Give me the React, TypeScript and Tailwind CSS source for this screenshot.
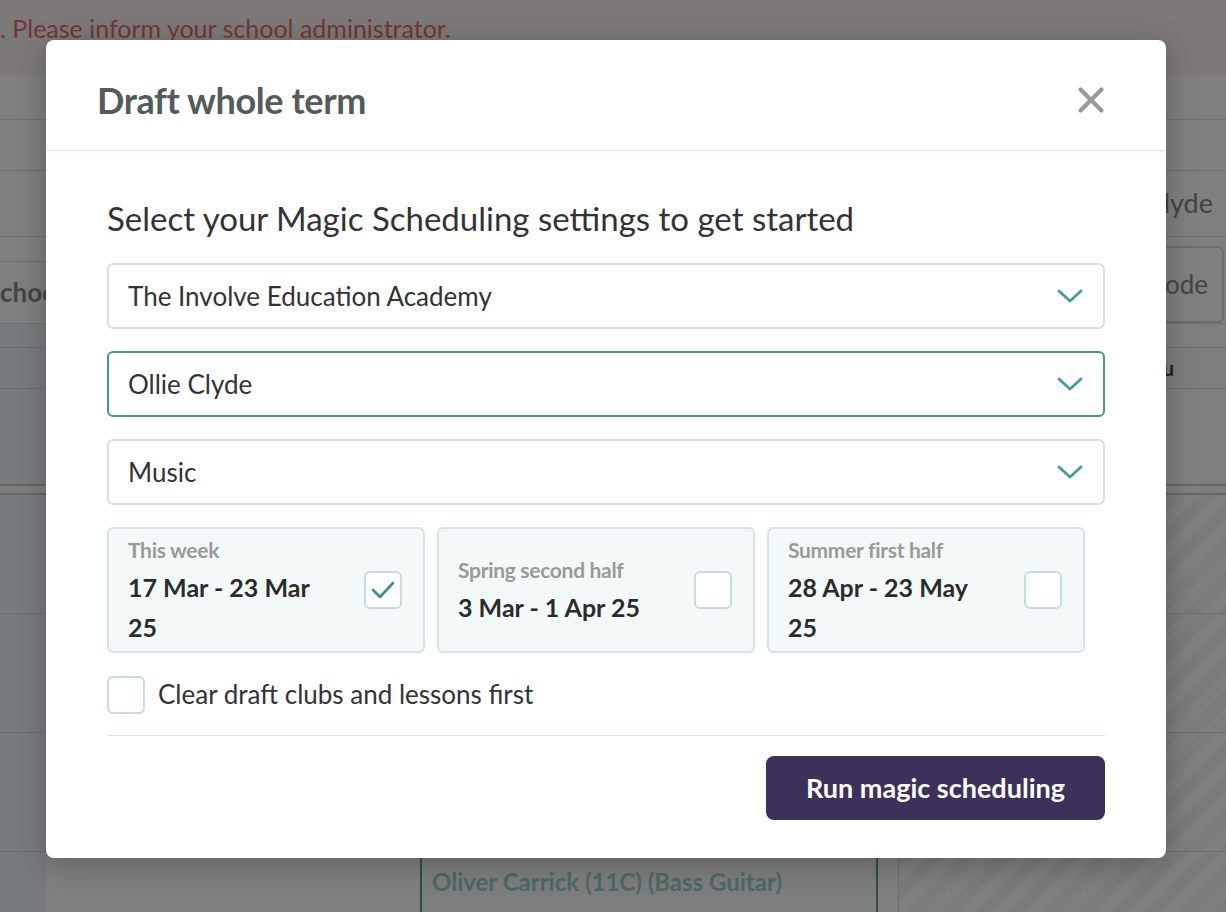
import React from "react";

const font = { fontFamily: "Lato, 'Noto Sans', sans-serif" };

function Chevron() {
  return (
    <svg width="26" height="16" viewBox="0 0 26 16" fill="none">
      <path d="M2 3 L13 13 L24 3" stroke="#4b9a9a" strokeWidth="2.8" strokeLinecap="round" strokeLinejoin="round" />
    </svg>
  );
}

function Select({ label, active }: { label: string; active?: boolean }) {
  return (
    <div
      className={
        "h-[66px] w-full rounded-[6px] bg-white flex items-center justify-between pl-[19px] pr-[20px] border-2 " +
        (active ? "border-[#4d9292]" : "border-[#dedede]")
      }
    >
      <span className="text-[26px] text-[#333333] leading-none">{label}</span>
      <Chevron />
    </div>
  );
}

function Box({ checked }: { checked?: boolean }) {
  return (
    <div className="w-[38px] h-[38px] shrink-0 rounded-[6px] border-2 border-[#c9dcdd] bg-white flex items-center justify-center">
      {checked && (
        <svg width="26" height="22" viewBox="0 0 26 22" fill="none">
          <path d="M3 11 L10 18 L23 4" stroke="#3f8f8f" strokeWidth="2.6" strokeLinecap="round" strokeLinejoin="round" />
        </svg>
      )}
    </div>
  );
}

function Card({ label, lines, checked }: { label: string; lines: string[]; checked?: boolean }) {
  return (
    <div className="w-[318px] h-[126px] rounded-[6px] border-2 border-[#d3e5e6] bg-[#f3f9f9] flex items-center justify-between pl-[19px] pr-[21px]">
      <div className="flex flex-col">
        <span className="text-[21px] font-bold text-[#999999] leading-[34px] tracking-[-0.3px]">{label}</span>
        {lines.map((l, i) => (
          <span key={i} className="text-[25px] font-bold text-[#2b2b2b] leading-[40px] whitespace-nowrap">
            {l}
          </span>
        ))}
      </div>
      <Box checked={checked} />
    </div>
  );
}

function BgRow({ h, children, cls }: { h: string; children?: React.ReactNode; cls?: string }) {
  return <div className={"w-full border-b border-[#dcdcdc] flex items-center justify-between " + h + " " + (cls || "")}>{children}</div>;
}

export default function App() {
  return (
    <div className="relative w-[1226px] h-[912px] overflow-hidden bg-white" style={font}>
      {/* background page */}
      <div className="flex flex-col w-full">
        <div className="h-[75px] bg-[#fcf3f2] flex items-start pt-[10px]">
          <span className="text-[25px] text-[#e0706b] whitespace-nowrap">. Please inform your school administrator.</span>
        </div>
        <BgRow h="h-[45px]" />
        <BgRow h="h-[51px]" />
        <BgRow h="h-[66px]">
          <span />
          <span className="text-[27px] text-[#888888] pr-[13px]">Ollie Clyde</span>
        </BgRow>
        <div className="h-[87px] w-full flex items-end border-b border-[#dcdcdc]">
          <div className="w-[300px] h-[62px] border-t border-[#dcdcdc] flex items-center">
            <span className="text-[26px] font-bold text-[#888888] whitespace-nowrap">chool</span>
          </div>
          <div className="flex-1" />
          <div className="h-[77px] mr-[2px] px-[14px] rounded-[6px] border-2 border-[#dcdcdc] flex items-center">
            <span className="text-[26px] text-[#888888] whitespace-nowrap">Mode</span>
          </div>
        </div>
        <div className="h-[24px] border-b border-[#dcdcdc] flex">
          <div className="w-[46px] bg-[#eef5fc]" />
        </div>
        <div className="h-[41px] border-b border-[#dcdcdc] flex items-center justify-between bg-[#fafafa]">
          <div className="w-[46px] h-full bg-[#eef5fc]" />
          <span className="text-[20px] font-bold text-[#444444] pr-[52px]">Thu</span>
        </div>
        <div className="h-[95px] flex">
          <div className="w-[46px] bg-[#eef5fc]" />
        </div>
        <div className="h-[11px] border-y-2 border-[#cccccc]" />
        <div className="flex flex-col">
          {[0, 1, 2].map((i) => (
            <div key={i} className="h-[119px] border-b border-[#dcdcdc] flex">
              <div className="w-[46px] bg-[#eef5fc]" />
              <div className="flex-1" />
              <div className="w-[60px] bg-[repeating-linear-gradient(135deg,#f6f6f6_0px,#f6f6f6_12px,#ffffff_12px,#ffffff_24px)]" />
            </div>
          ))}
          <div className="h-[60px] flex">
            <div className="w-[46px] bg-[#eef5fc]" />
            <div className="w-[374px]" />
            <div className="w-[458px] border-x-2 border-[#5f9a9a] bg-[#f8fafa] flex items-center pl-[10px]">
              <span className="text-[24px] font-bold text-[#9ad0d0] whitespace-nowrap">Oliver Carrick (11C) (Bass Guitar)</span>
            </div>
            <div className="w-[20px]" />
            <div className="flex-1 border-l border-[#dcdcdc] bg-[repeating-linear-gradient(135deg,#f6f6f6_0px,#f6f6f6_12px,#ffffff_12px,#ffffff_24px)]" />
          </div>
        </div>
      </div>

      {/* overlay */}
      <div className="absolute inset-0 bg-black/50" />

      {/* modal */}
      <div className="absolute left-[46px] top-[40px] w-[1120px] h-[818px] bg-white rounded-[8px] shadow-[0_6px_30px_rgba(0,0,0,0.25)] flex flex-col">
        <div className="h-[111px] shrink-0 border-b border-[#d5e8e8] flex items-center justify-between pl-[51px] pr-[61px] pt-[9px]">
          <h2 className="text-[36px] font-bold text-[#545b5a] leading-none tracking-[-0.4px]">Draft whole term</h2>
          <svg width="28" height="28" viewBox="0 0 28 28" fill="none">
            <path d="M3.5 3.5 L24.5 24.5 M24.5 3.5 L3.5 24.5" stroke="#999999" strokeWidth="4.2" strokeLinecap="round" />
          </svg>
        </div>
        <div className="flex flex-col px-[61px] pt-[47px]">
          <p className="text-[33px] leading-[40px] text-[#333333] font-normal whitespace-nowrap">
            Select your Magic Scheduling settings to get started
          </p>
          <div className="mt-[25px] flex flex-col gap-[22px]">
            <Select label="The Involve Education Academy" />
            <Select label="Ollie Clyde" active />
            <Select label="Music" />
          </div>
          <div className="mt-[22px] flex gap-[12px]">
            <Card label="This week" lines={["17 Mar - 23 Mar", "25"]} checked />
            <Card label="Spring second half" lines={["3 Mar - 1 Apr 25"]} />
            <Card label="Summer first half" lines={["28 Apr - 23 May", "25"]} />
          </div>
          <div className="mt-[22px] flex items-center gap-[13px]">
            <Box />
            <span className="text-[26px] text-[#333333]">Clear draft clubs and lessons first</span>
          </div>
          <div className="mt-[21px] h-px bg-[#d5e8e8]" />
          <div className="mt-[20px] flex justify-end">
            <button className="h-[64px] w-[339px] rounded-[8px] bg-[#3b315b] text-white text-[27px] font-bold">
              Run magic scheduling
            </button>
          </div>
        </div>
      </div>
    </div>
  );
}
